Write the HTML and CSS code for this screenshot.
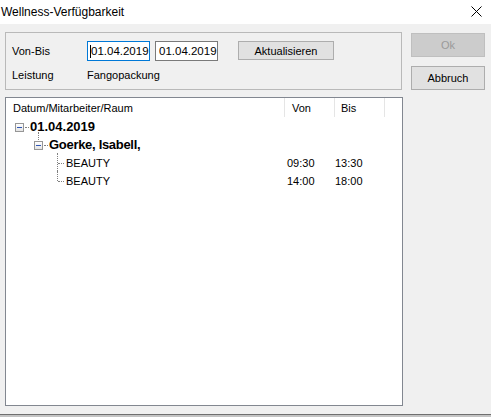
FILE: index.html
```html
<!DOCTYPE html>
<html lang="de">
<head>
<meta charset="utf-8">
<title>Wellness-Verfügbarkeit</title>
<link rel="stylesheet" href="styles.css">
</head>
<body>
<div class="window">
  <div class="titlebar">
    <span class="title">Wellness-Verfügbarkeit</span>
    <svg class="close" width="11" height="11" viewBox="0 0 11 11"><path d="M0.5 0.5 L10.5 10.5 M10.5 0.5 L0.5 10.5" stroke="#000" stroke-width="1" fill="none"/></svg>
  </div>
  <div class="client">
    <div class="leftcol">
      <div class="group">
        <div class="grow">
          <span class="lbl">Von-Bis</span>
          <div class="tb focus"><span class="caret"></span>01.04.2019</div>
          <div class="tb">01.04.2019</div>
          <div class="btn refresh">Aktualisieren</div>
        </div>
        <div class="grow second">
          <span class="lbl">Leistung</span>
          <span class="val">Fangopackung</span>
        </div>
      </div>
      <div class="list">
        <div class="hdr">
          <div class="hc c1">Datum/Mitarbeiter/Raum</div>
          <div class="hc c2">Von</div>
          <div class="hc c3">Bis</div>
        </div>
        <div class="row l0">
          <div class="tree"><span class="exp"></span><span class="hl"></span><b class="date">01.04.2019</b></div>
        </div>
        <div class="row l1">
          <div class="tree"><span class="exp up"></span><span class="hl"></span><b class="name">Goerke, Isabell,</b></div>
        </div>
        <div class="row l2">
          <div class="tree"><span class="leaf"></span><span class="txt">BEAUTY</span></div>
          <div class="t1">09:30</div>
          <div class="t2">13:30</div>
        </div>
        <div class="row l2">
          <div class="tree"><span class="leaf last"></span><span class="txt">BEAUTY</span></div>
          <div class="t1">14:00</div>
          <div class="t2">18:00</div>
        </div>
      </div>
    </div>
    <div class="rightcol">
      <div class="btn side disabled">Ok</div>
      <div class="btn side abort">Abbruch</div>
    </div>
  </div>
  <div class="bottomedge"></div>
</div>
</body>
</html>
```
FILE: styles.css
```css
html, body {
  margin: 0;
  padding: 0;
  background: #f0f0f0;
}
body {
  font-family: "Liberation Sans", Arial, sans-serif;
  font-size: 11px;
  color: #000;
}
.window {
  width: 491px;
  height: 417px;
  display: flex;
  flex-direction: column;
}
.titlebar {
  height: 24px;
  background: #fff;
  display: flex;
  align-items: center;
  justify-content: space-between;
  flex-shrink: 0;
}
.title {
  font-size: 12px;
  padding-left: 1px;
  margin-top: -1px;
}
.close {
  margin-right: 9px;
  margin-top: -1px;
}
.client {
  height: 390px;
  box-sizing: border-box;
  padding: 8px 0 0 5px;
  display: flex;
  flex-shrink: 0;
}
.leftcol {
  width: 398px;
  display: flex;
  flex-direction: column;
}
.group {
  width: 397px;
  height: 58px;
  box-sizing: border-box;
  border: 1px solid #b9b9b9;
  padding: 8px 0 0 6px;
}
.grow {
  display: flex;
  align-items: center;
  height: 20px;
}
.grow.second {
  margin-top: 7px;
  height: 14px;
}
.lbl {
  width: 75px;
  flex-shrink: 0;
}
.tb {
  width: 63px;
  height: 20px;
  box-sizing: border-box;
  border: 1px solid #7a7a7a;
  background: #fff;
  display: flex;
  align-items: center;
  padding-left: 3px;
  margin-right: 5px;
  font-size: 11.5px;
}
.tb.focus {
  border-color: #0078d7;
}
.caret {
  width: 1px;
  height: 13px;
  background: #000;
  margin-left: -1px;
}
.btn {
  box-sizing: border-box;
  background: #e1e1e1;
  border: 1px solid #adadad;
  display: flex;
  align-items: center;
  justify-content: center;
}
.refresh {
  width: 96px;
  height: 19px;
  margin-left: 15px;
  margin-top: -1px;
}
.list {
  margin-top: 7px;
  width: 398px;
  height: 309px;
  box-sizing: border-box;
  border: 1px solid #828790;
  background: #fff;
}
.hdr {
  display: flex;
  height: 19px;
  align-items: stretch;
}
.hc {
  box-sizing: border-box;
  border-right: 1px solid #e5e5e5;
  display: flex;
  align-items: center;
}
.c1 { width: 279px; padding-left: 7px; }
.c2 { width: 50px; padding-left: 7px; }
.c3 { width: 50px; padding-left: 6px; }
.row {
  display: flex;
  height: 18px;
  align-items: center;
}
.tree {
  width: 278px;
  height: 18px;
  box-sizing: border-box;
  display: flex;
  align-items: center;
  flex-shrink: 0;
}
.l0 .tree { padding-left: 9px; }
.l1 .tree { padding-left: 28px; }
.l2 .tree { padding-left: 51px; }
.exp {
  width: 9px;
  height: 9px;
  box-sizing: border-box;
  border: 1px solid #969696;
  background: linear-gradient(#ffffff, #e4e4e4);
  position: relative;
  margin-top: 3px;
}
.exp::after {
  content: "";
  position: absolute;
  left: 1px;
  top: 3px;
  width: 5px;
  height: 1px;
  background: #2f56b4;
}
.exp.up::before {
  content: "";
  position: absolute;
  left: 3px;
  bottom: 9px;
  height: 8px;
  border-left: 1px dotted #808080;
}
.hl {
  width: 4px;
  border-top: 1px dotted #808080;
  margin-left: 1px;
  margin-right: 1px;
  margin-top: 3px;
}
.date {
  font-size: 13px;
  font-weight: bold;
}
.name {
  font-size: 13px;
  font-weight: bold;
  letter-spacing: -0.3px;
}
.leaf {
  width: 9px;
  height: 18px;
  position: relative;
}
.leaf::before {
  content: "";
  position: absolute;
  left: 0;
  top: 0;
  height: 18px;
  border-left: 1px dotted #808080;
}
.leaf.last::before {
  height: 10px;
}
.leaf::after {
  content: "";
  position: absolute;
  left: 1px;
  top: 10px;
  width: 6px;
  border-top: 1px dotted #808080;
}
.txt {
  padding-top: 2px;
}
.t1 {
  width: 50px;
  padding-left: 3px;
  box-sizing: border-box;
  padding-top: 2px;
}
.t2 {
  width: 50px;
  padding-left: 1px;
  box-sizing: border-box;
  padding-top: 2px;
}
.rightcol {
  margin-left: 8px;
  padding-top: 1px;
  display: flex;
  flex-direction: column;
}
.side {
  width: 74px;
  height: 24px;
}
.disabled {
  background: #cccccc;
  border-color: #bfbfbf;
  color: #9a9a9a;
}
.abort {
  margin-top: 9px;
}
.bottomedge {
  height: 3px;
  border-top: 1px solid #6f6f6f;
  background: #c4c4c4;
  flex-shrink: 0;
}
```
